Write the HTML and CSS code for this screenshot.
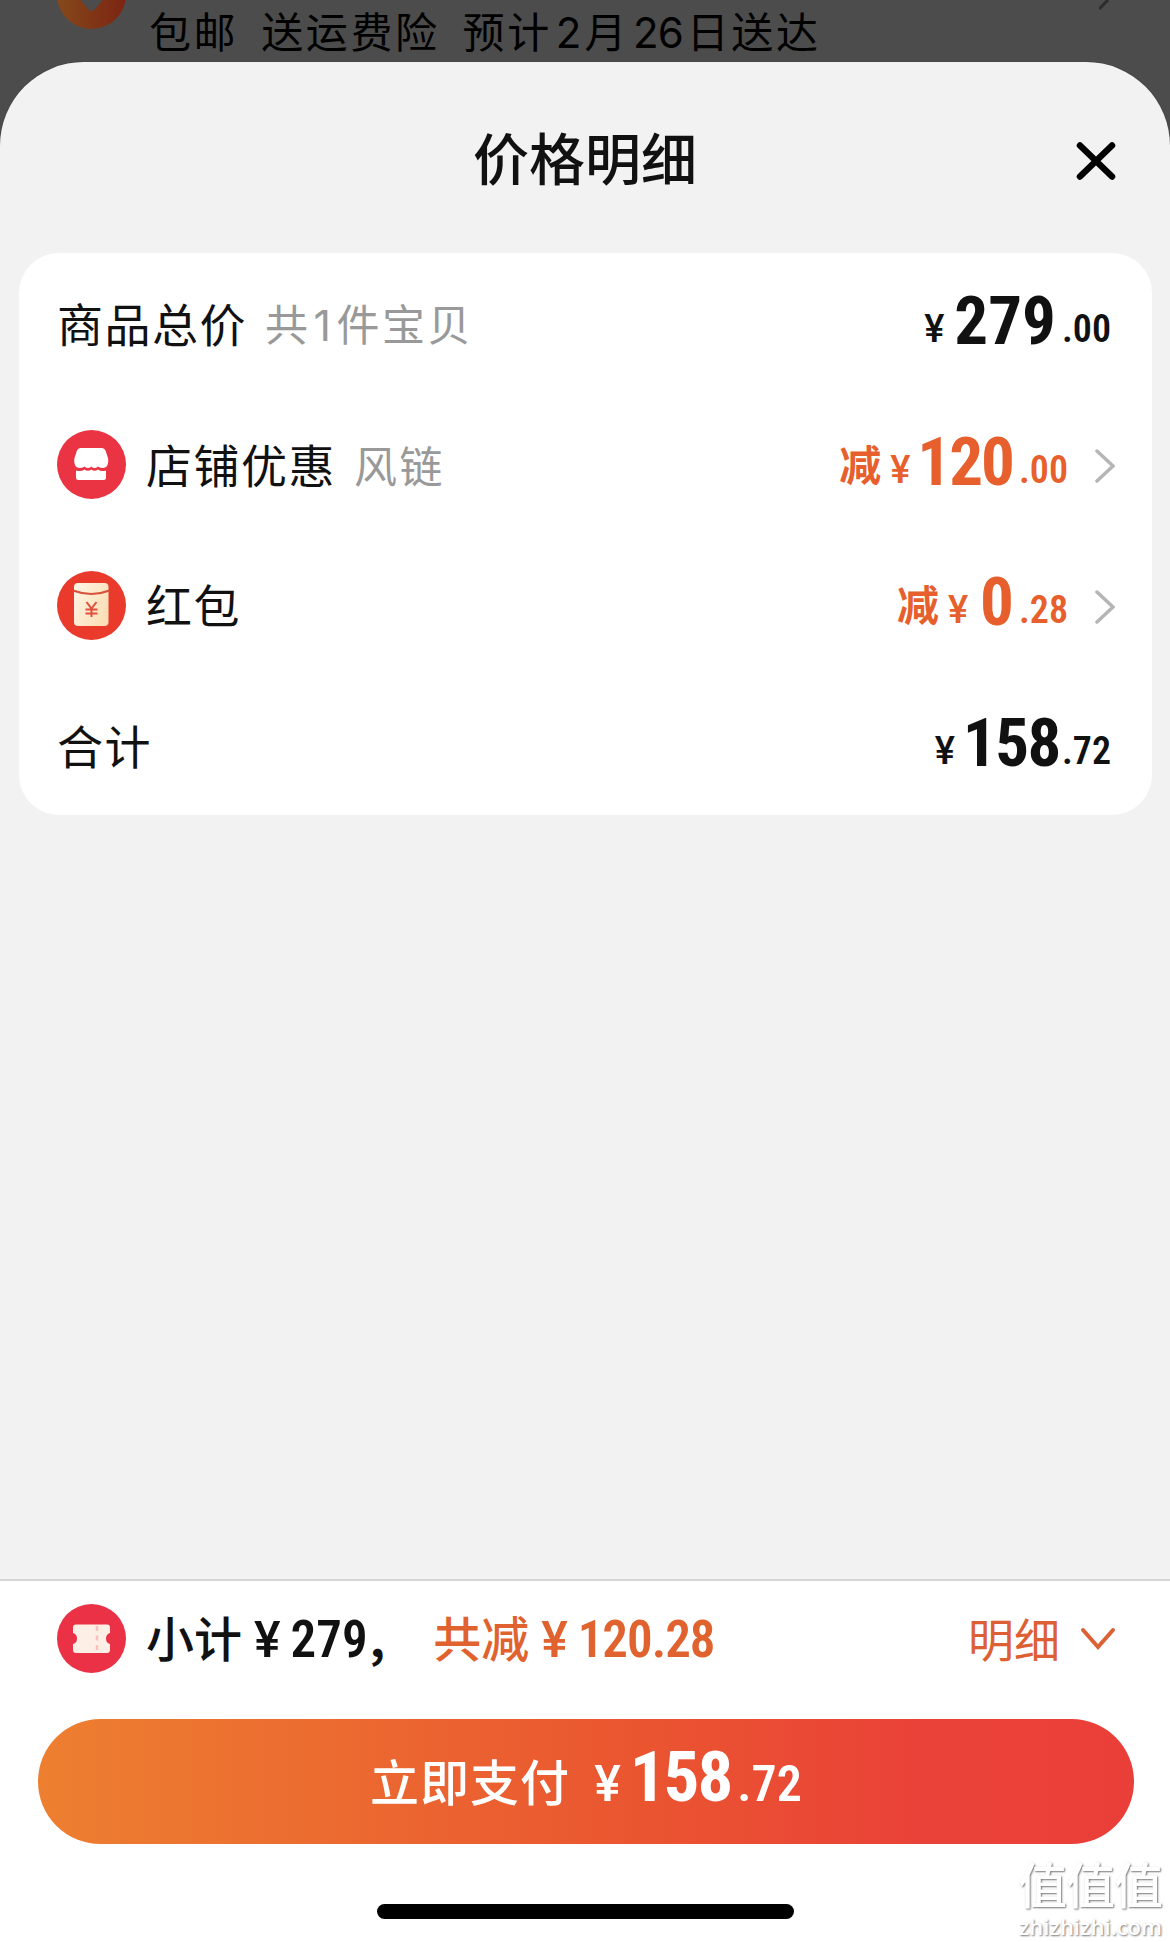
FILE: index.html
```html
<!DOCTYPE html>
<html lang="zh-CN">
<head>
    <meta charset="UTF-8">
    <meta name="viewport" content="width=device-width, initial-scale=1.0">
    <title>价格明细</title>
    <link rel="stylesheet" href="styles.css">
</head>
<body>
    <!-- Order page behind the sheet -->
    <div class="backdrop">
        <svg class="backdrop-icon" width="69" height="30" viewBox="0 0 69 30">
            <defs>
                <linearGradient id="dim" x1="0" x2="1"><stop offset="0" stop-color="#85491a"/><stop offset="1" stop-color="#7c2412"/></linearGradient>
            </defs>
            <circle cx="34.5" cy="-5.5" r="34.5" fill="url(#dim)"/>
            <path d="M20 -4L31 9q3.500 4 7 0L49 -4z" fill="#4c4c4c"/>
        </svg>
        <span>包邮</span>
        <span>送运费险</span>
        <span>预计<b>2</b>月<b>26</b>日送达</span>
        <svg class="backdrop-arrow" width="14" height="10" viewBox="0 0 14 10"><path d="M0 9L9 0" stroke="#2c2c2c" stroke-width="3"/></svg>
    </div>

    <div class="sheet">
        <header>
            <h1>价格明细</h1>
            <svg class="close" width="40" height="38" viewBox="0 0 40 38"><path d="M4 3.500L36 34.500M36 3.500L4 34.500" stroke="#000" stroke-width="6.500" stroke-linecap="round"/></svg>
        </header>

        <div class="card">
            <div class="row">
                <span class="label">商品总价</span>
                <span class="note">共<i>1</i>件宝贝</span>
                <div class="price"><span class="yen">¥</span><span class="num">279</span><span class="cents">.00</span></div>
            </div>
            <div class="row">
                <svg class="icon" width="69" height="69" viewBox="0 0 69 69">
                    <circle cx="34.500" cy="34.500" r="34.500" fill="#ea3343"/>
                    <path d="M23.500 18h21.500q2.500 0 3.500 2.500l2.500 7.500c1 6-1 10-5 10q-3 0-5-1.500-3.500 3-6.750 0-3.250 3-6.750 0-2 1.500-5 1.500c-4 0-6-4-5-10l2.500-7.500q1-2.500 3.500-2.500z" fill="#fff"/>
                    <path d="M19 40.500q5 1.500 8.500-1 3.500 2.500 6.750 0 3.250 2.500 6.750 0 3.500 2.500 8 1v7q0 2.500-2.500 2.500h-25q-2.500 0-2.500-2.500z" fill="#fff"/>
                </svg>
                <span class="label">店铺优惠</span>
                <span class="note">风链</span>
                <div class="price minus"><span class="cut">减</span><span class="yen">¥</span><span class="num tight">120</span><span class="cents">.00</span></div>
                <svg class="arrow" width="20" height="34" viewBox="0 0 20 34"><path d="M2 2L18 17L2 32" fill="none" stroke="#b5b5b5" stroke-width="3.500" stroke-linecap="round"/></svg>
            </div>
            <div class="row">
                <svg class="icon" width="69" height="69" viewBox="0 0 69 69">
                    <defs>
                        <linearGradient id="packet" x1="0" x2="1" y2=".5"><stop offset="0" stop-color="#fff6e6"/><stop offset="1" stop-color="#fbdfb8"/></linearGradient>
                    </defs>
                    <circle cx="34.500" cy="34.500" r="34.500" fill="#e93a2c"/>
                    <rect x="17" y="12" width="34.500" height="43" rx="4" fill="url(#packet)"/>
                    <path d="M16 19.500q18.500 7 36.500 0" fill="none" stroke="#d9503a" stroke-width="2"/>
                    <path d="M29.500 31l5 6.500 5-6.500M34.500 37.500V46M28.500 38.500h12M28.500 42.500h12" fill="none" stroke="#e0503f" stroke-width="2"/>
                </svg>
                <span class="label">红包</span>
                <div class="price minus"><span class="cut">减</span><span class="yen">¥</span><span class="num single">0</span><span class="cents">.28</span></div>
                <svg class="arrow" width="20" height="34" viewBox="0 0 20 34"><path d="M2 2L18 17L2 32" fill="none" stroke="#b5b5b5" stroke-width="3.500" stroke-linecap="round"/></svg>
            </div>
            <div class="row">
                <span class="label">合计</span>
                <div class="price total"><span class="yen">¥</span><span class="num tight">158</span><span class="cents">.72</span></div>
            </div>
        </div>
    </div>

    <footer>
        <div class="summary">
            <svg class="icon" width="69" height="69" viewBox="0 0 69 69">
                <circle cx="34.500" cy="34.500" r="34.500" fill="#ea3146"/>
                <path d="M19 20.500h31q3 0 3 3v5.500q-4 1-4 5.500t4 5.500v6q0 3-3 3H19q-3 0-3-3v-6q4-1 4-5.500T16 29v-5.500q0-3 3-3z" fill="#fdeee6"/>
                <path d="M40 22v27" stroke="#f7c2bb" stroke-width="2.500" stroke-dasharray="5 4.500"/>
            </svg>
            <span class="subtotal">小计<span class="sum-yen">¥</span><span class="sum-num">279</span><span class="comma">,</span></span>
            <span class="saved">共减<span class="sum-yen">¥</span><span class="sum-num">120.28</span></span>
            <span class="detail">明细</span>
            <svg width="36" height="24" viewBox="0 0 36 24"><path d="M3 3L18 20L33 3" fill="none" stroke="#dc6034" stroke-width="4" stroke-linecap="round"/></svg>
        </div>
        <div class="pay">
            <span class="pay-text">立即支付</span>
            <span class="yen">¥</span><span class="num tight">158</span><span class="cents">.72</span>
        </div>
        <div class="home-bar"></div>
    </footer>

    <div class="watermark">
        <div class="mark-name">值值值</div>
        <div class="mark-site">zhizhizhi.com</div>
    </div>
</body>
</html>
```
FILE: styles.css
```css
* {
    box-sizing: border-box;
}

body {
    margin: 0;
    height: 1942px;
    display: flex;
    flex-direction: column;
    position: relative;
    overflow: hidden;
    background-color: #4c4c4c;
    color: #111;
    font-family: "Noto Sans CJK SC", sans-serif;
    line-height: 1;
}

svg {
    display: block;
    flex: none;
}

/* Dimmed page */
.backdrop {
    display: flex;
    height: 62px;
    padding: 0 57px;
    color: #000;
    font-size: 42px;
    letter-spacing: 2.6px;
    line-height: 60px;
    white-space: nowrap;
}

.backdrop span {
    margin-left: 23px;
}

.backdrop b {
    font-family: Inter, sans-serif;
    font-size: 42px;
    font-weight: 400;
    letter-spacing: -1px;
    margin: 0 4px 0 4px;
}

.backdrop-arrow {
    margin-left: auto;
}

/* Sheet */
.sheet {
    flex: 1;
    padding: 0 18px 0 19px;
    background-color: #f2f2f2;
    border-radius: 84px 84px 0 0;
    box-shadow: 0 0 0 1px #474747;
}

header {
    display: flex;
    align-items: center;
    height: 191px;
    padding-right: 36px;
}

h1 {
    flex: 1;
    margin: 0 0 3px 75px;
    text-align: center;
    font-size: 56px;
    font-weight: 500;
}

.close {
    margin-top: 6px;
}

/* Price card */
.card {
    height: 562px;
    background-color: #fff;
    border-radius: 40px;
}

.row {
    display: flex;
    align-items: center;
    height: 140.5px;
    padding: 2px 37px 0 38px;
}

.icon {
    margin-right: 20px;
}

.label {
    margin-bottom: 4px;
    font-size: 46px;
    letter-spacing: 1.5px;
}

.note {
    margin-left: 18px;
    color: #999;
    font-size: 43px;
    letter-spacing: 2.5px;
}

.note i {
    font-family: Inter, sans-serif;
    font-style: normal;
    margin: 0 3px;
}

.arrow {
    margin-top: 3px;
}

.price {
    margin-left: auto;
    margin-right: 4px;
    margin-bottom: 5px;
    white-space: nowrap;
}

.yen,
.num,
.cents,
.sum-yen,
.sum-num {
    font-family: Roboto, sans-serif;
    font-stretch: 75%;
}

.yen,
.sum-yen {
    font-stretch: 100%;
}

.yen {
    font-size: 38px;
    font-weight: 500;
}

.num {
    margin-left: 10px;
    font-size: 67px;
    font-weight: 700;
}

.tight {
    margin-left: 7px;
    letter-spacing: -2px;
}

.single {
    margin-left: 12px;
}

.cents {
    margin-left: 6px;
    font-size: 38px;
    font-weight: 600;
}

/* small parts sit a little above the big digits' baseline */
.price .yen,
.price .cents {
    vertical-align: 2px;
}

.single + .cents {
    margin-left: 5px;
}

.total .yen {
    margin-right: -2px;
}

.total .num {
    margin-left: 10px;
    letter-spacing: -1.5px;
}

.total .cents {
    margin-left: 2px;
}

.minus {
    margin-right: 27px;
    color: #e65f2c;
}

.cut {
    margin-right: 9px;
    font-size: 42px;
    font-weight: 600;
    vertical-align: 4px;
}

/* Bottom bar */
footer {
    height: 363px;
    padding: 23px 36px 0 38px;
    background-color: #fff;
    border-top: 2px solid #d4d4d4;
}

.summary {
    display: flex;
    align-items: center;
    height: 69px;
    margin-bottom: 46px;
    padding: 0 18px 0 19px;
}

.subtotal,
.saved {
    display: flex;
    align-items: baseline;
    font-size: 48px;
    font-weight: 500;
}

.saved {
    margin-left: 48px;
    color: #e0632f;
}

.sum-yen {
    margin-left: 12px;
    font-size: 50px;
    font-weight: 500;
}

.sum-num {
    margin-left: 10px;
    font-size: 51px;
    font-weight: 600;
}

.comma {
    margin-left: 2px;
    font-weight: 700;
}

.saved .sum-num {
    letter-spacing: -1px;
}

.detail {
    margin-left: auto;
    margin-right: 20px;
    margin-bottom: 3px;
    color: #dc6034;
    font-size: 46px;
}

.pay {
    display: flex;
    align-items: baseline;
    justify-content: center;
    height: 125px;
    border-radius: 63px;
    background: linear-gradient(90deg, #ed7f30, #ea5530 55%, #ea4238 80%, #ea3f39);
    color: #fff;
    line-height: 116px;
}

.pay-text {
    margin-right: 24px;
    font-size: 49px;
    font-weight: 500;
    letter-spacing: 1px;
}

.pay .yen,
.pay .cents {
    font-size: 50px;
}

.pay .num {
    font-size: 71px;
    margin-left: 9px;
}

.home-bar {
    width: 417px;
    height: 15px;
    margin: 60px 0 0 339px;
    border-radius: 8px;
    background-color: #000;
}

/* Watermark over the page corner */
.watermark {
    position: absolute;
    right: 8px;
    bottom: 5px;
    color: #fff;
    text-align: right;
    text-shadow: 1px 1px 2px #777;
}

.mark-name {
    margin-bottom: 8px;
    font-size: 49px;
    letter-spacing: -1px;
    font-weight: 500;
}

.mark-site {
    font-family: "Open Sans", sans-serif;
    font-size: 22px;
    font-weight: 600;
}
```
